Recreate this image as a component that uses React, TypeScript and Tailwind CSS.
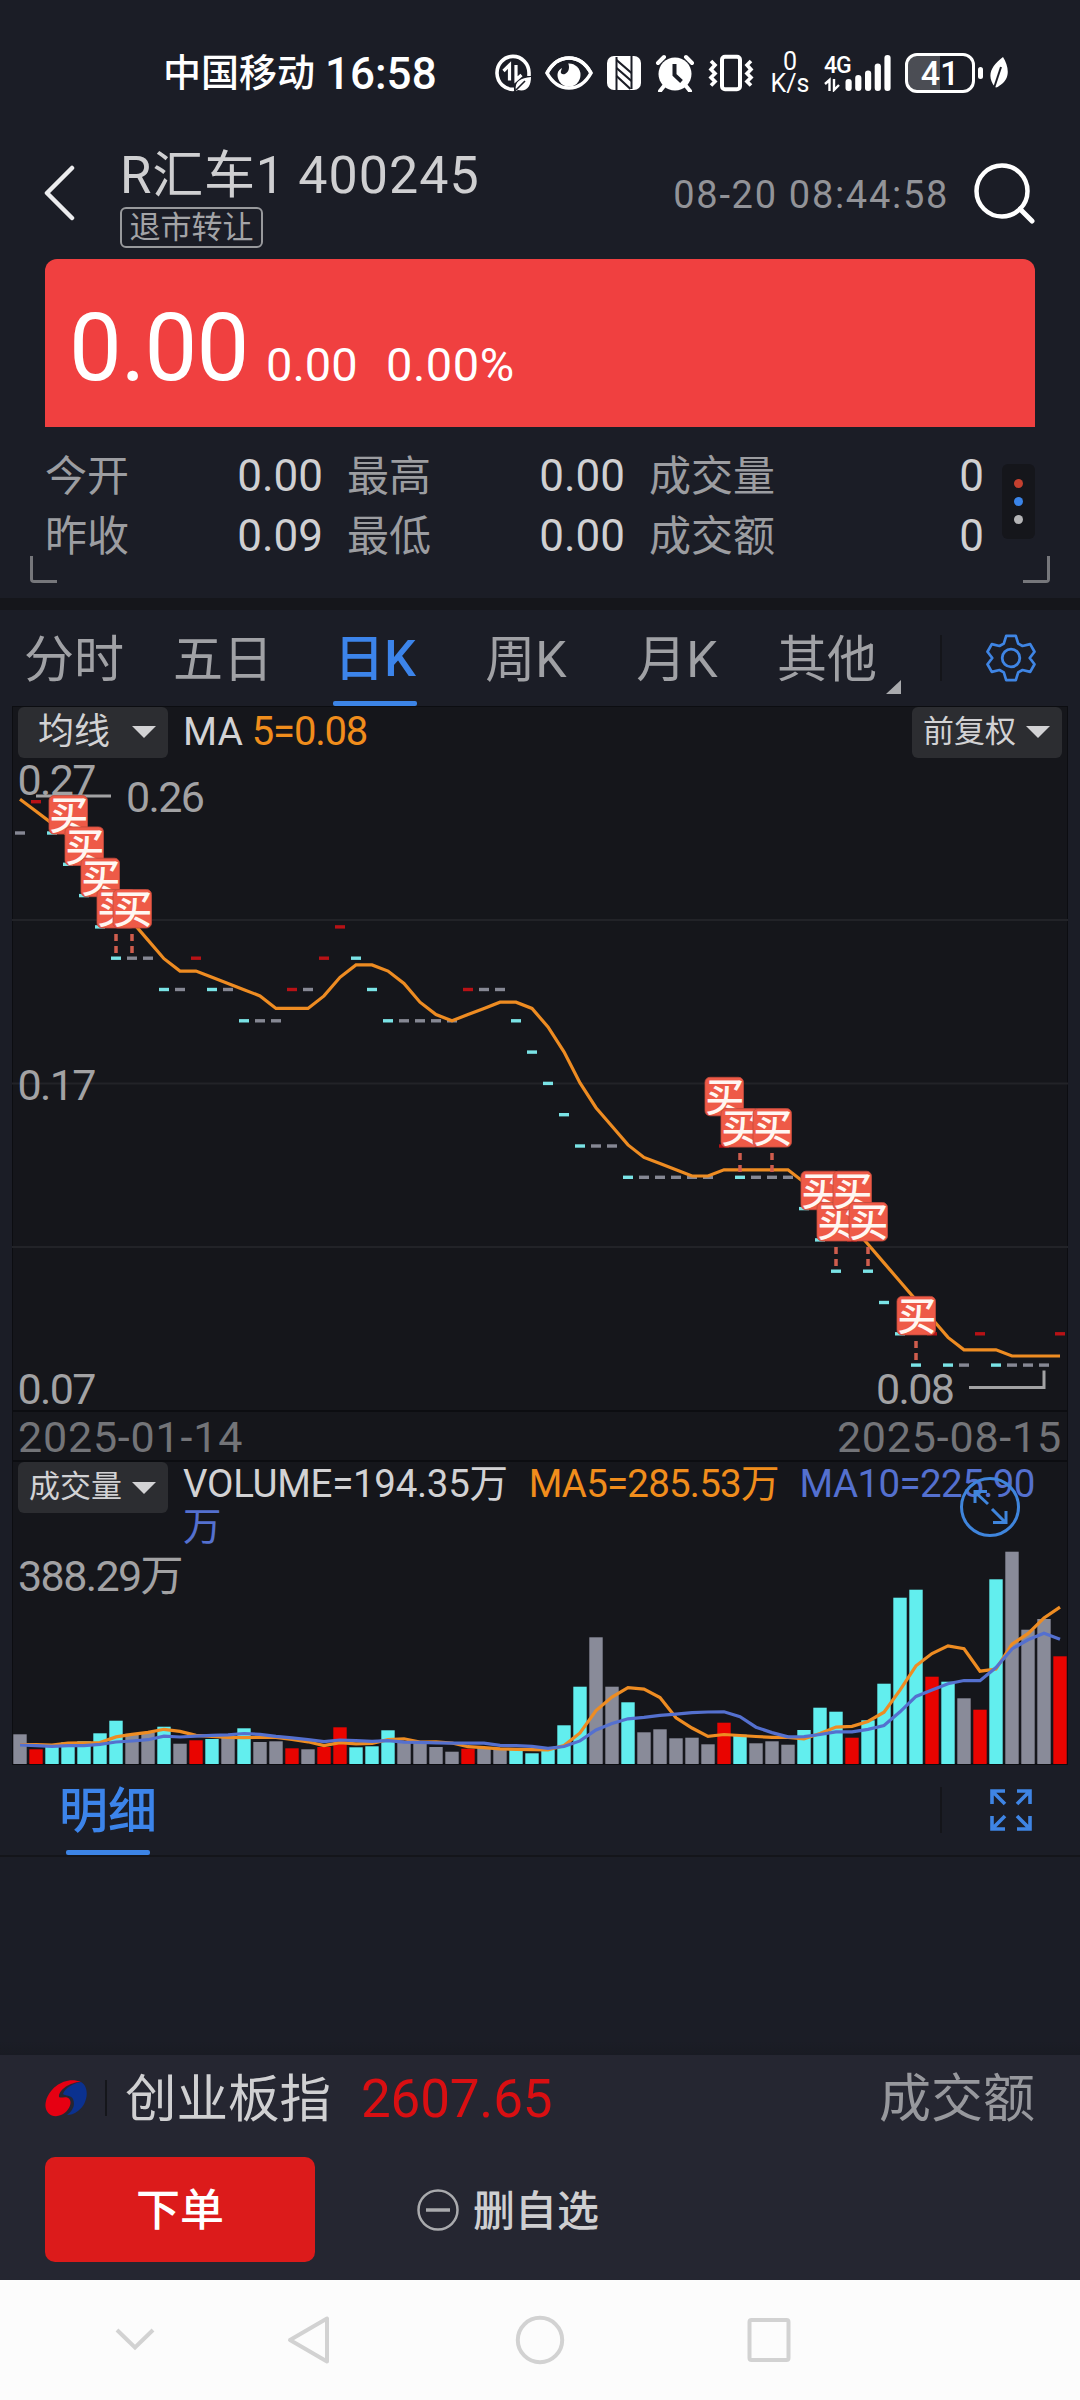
import React from "react";

const FONT = "font-[Roboto,'Noto_Sans_CJK_SC',sans-serif]";

const COLORS: Record<string, string> = {
  g: "#898b99",
  r: "#e90400",
  c: "#62eeee",
};

const DASH_COLORS: Record<string, string> = {
  g: "#868894",
  r: "#b81216",
  c: "#7ae3e6",
};

// one letter per day: g = flat, r = up, c = down
const KINDS =
  "grccccc" + "ggcgrcg" + "cggrgrr" + "ccc" + "gggg" + "rgg" + "cccc" + "cgg" + "cggggg" + "rcggg" + "cccrcccc" + "rcgrcgggr";

// price steps below 0.26, one step is 0.01
const LEVELS = [
  1, 0, 1, 2, 3, 4, 5, 5, 5, 6, 6, 5, 6, 6, 7, 7, 7, 6, 6, 5, 4, 5, 6, 7, 7, 7,
  7, 7, 6, 6, 6, 7, 8, 9, 10, 11, 11, 11, 12, 12, 12, 12, 12, 12, 11, 12, 12,
  12, 12, 13, 14, 15, 14, 15, 16, 17, 18, 17, 18, 18, 17, 18, 18, 18, 18, 17,
];

const VOLUMES = [
  29.7, 14.7, 17, 21.7, 22.7, 30.7, 43.3, 30.3, 31.7, 37.3, 20.3, 23.7, 25, 27,
  35.7, 22, 22.7, 15.7, 14.7, 17, 36.7, 16.7, 17.7, 33.7, 21, 21, 17, 12.3,
  15.3, 16.3, 14.7, 14.3, 10.7, 14.3, 38.7, 77.3, 126.7, 77.3, 61.7, 31.7,
  34.7, 25.7, 26.3, 19.7, 41.3, 29.3, 20.7, 22.7, 19.3, 34, 56.3, 52.3, 26.3,
  43.7, 80.3, 166.3, 174.3, 87.3, 82.3, 65.7, 54.3, 184.7, 212.3, 134.3, 145,
  107.7,
];

const BUYS = [3, 4, 5, 6, 7, 44, 45, 47, 50, 51, 52, 53, 56];

const barX = (i: number) => 8 + 16 * i;

const average = (data: number[], size: number, first: number[]) =>
  data.map((_, i) => {
    if (i < first.length) return first[i];
    const part = data.slice(i - size + 1, i + 1);
    return part.reduce((a, b) => a + b, 0) / size;
  });

const toPoints = (values: number[], y: (v: number) => number) =>
  values.map((v, i) => `${barX(i)},${y(v).toFixed(1)}`).join(" ");

const priceMa = average(LEVELS, 5, [-0.14, 0.25, 0.64, 1.02]);
const volMa5 = average(VOLUMES, 5, [19.5, 19.5, 19, 21]);
const volMa10 = average(VOLUMES, 10, [19, 18.3, 17.7, 18.3, 18.3, 19.7, 22, 23, 24.3]);

const StatusBar = () => (
  <div className="flex h-[146px] items-center pl-[163px] text-white">
    <span className="w-[156px] text-[38px] font-medium whitespace-nowrap">中国移动</span>
    <span className="ml-[6px] w-[112px] pt-[2px] text-[44px] font-medium">16:58</span>
    <svg className="ml-[57px]" width="38" height="40" viewBox="0 0 38 40" fill="none" stroke="#fff">
      <path d="M35 20A16 16.5 0 1 0 20 36.3M35 20v3" strokeWidth="3.6" />
      <path d="M9.5 18l6-6v15.5M22 12v15l5.5-5" strokeWidth="3.2" />
      <path d="M22 38c-2-10 5-13 15-14 0 9-4 15-13 13z" fill="#fff" stroke="none" />
      <path d="M22 37l9-9" stroke="#1b1d26" strokeWidth="1.6" />
    </svg>
    <svg className="ml-[12px]" width="50" height="36" viewBox="0 0 50 36">
      <path d="M3 18C14-2 36-2 47 18C36 38 14 38 3 18Z" fill="none" stroke="#fff" strokeWidth="3.6" />
      <circle cx="25" cy="20" r="11.5" fill="#fff" />
      <path d="M12 8h12c2 4 1 9-3 11-3 1-5-1-4-3l1-3c-2 1-4 3-5 6z" fill="#1b1d26" />
      <path d="M3 18C14-2 36-2 47 18" fill="none" stroke="#fff" strokeWidth="3.6" />
    </svg>
    <svg className="ml-[13px]" width="34" height="36" viewBox="0 0 34 36">
      <rect x="0" y="1" width="34" height="34" rx="7" fill="#fff" />
      <path d="M9.5 35V2M24.5 34V1" fill="none" stroke="#1b1d26" strokeWidth="2" />
      <path d="M9.500 5l15 13M9.500 13l15 13M9.500 21l14 13" fill="none" stroke="#1b1d26" strokeWidth="2.200" />
    </svg>
    <svg className="ml-[14px]" width="40" height="38" viewBox="0 0 40 38">
      <circle cx="20" cy="20" r="16.5" fill="#fff" />
      <path d="M3 9l6-6M37 9l-6-6M9 32l-4 5M31 32l4 5" stroke="#fff" strokeWidth="4" strokeLinecap="round" />
      <path d="M19.5 10v11l7 6.5" fill="none" stroke="#1b1d26" strokeWidth="4" />
    </svg>
    <svg className="ml-[13px]" width="46" height="38" viewBox="0 0 46 38" fill="none" stroke="#fff">
      <rect x="14" y="2.8" width="18" height="32.5" rx="3" strokeWidth="4" />
      <path d="M3 7l4 4-4 4.500 4 4-4 4 4 4-4 4M43 7l-4 4 4 4.500-4 4 4 4-4 4 4 4" strokeWidth="3.600" />
    </svg>
    <div className="ml-[18px] flex w-[36px] flex-col items-center text-[25px] leading-[22px]">
      <span>0</span>
      <span className="whitespace-nowrap">K/s</span>
    </div>
    <div className="ml-[16px] flex w-[26px] flex-col">
      <span className="text-[23px] leading-[22px] font-medium tracking-[-1px]">4G</span>
      <svg width="18" height="15" viewBox="0 0 18 15" fill="none" stroke="#fff" strokeWidth="2.4">
        <path d="M1 7l4.5-4v11M10 2v11l5-5" />
      </svg>
    </div>
    <svg className="ml-[-5px]" width="46" height="38" viewBox="0 0 46 38" fill="#fff">
      <rect x="0.5" y="25" width="6.2" height="12" rx="3" />
      <rect x="10.2" y="21" width="6.2" height="16" rx="3" />
      <rect x="20" y="16.5" width="6.2" height="20.5" rx="3" />
      <rect x="29.7" y="9.5" width="6.2" height="27.5" rx="3" />
      <rect x="39.4" y="1" width="6.2" height="36" rx="3" />
    </svg>
    <div className="ml-[14px] flex h-[40px] w-[70px] items-center justify-center rounded-[12px] border-[3px] border-white bg-linear-to-r from-[#4b4d54] from-50% to-transparent to-50% text-[34px] font-medium">
      41
    </div>
    <div className="ml-[3px] h-[12px] w-[5px] rounded-full bg-white" />
    <svg className="ml-[6px]" width="20" height="32" viewBox="0 0 20 32">
      <path d="M14 0c6 10 8 22-4 29-1 1-3 2-4 1C-3 19 2 9 14 0z" fill="#fff" />
      <path d="M12 10L5 31" stroke="#1b1d26" strokeWidth="2" />
    </svg>
  </div>
);

const TitleBar = () => (
  <div className="flex h-[113px] pr-[45px] pl-[43px]">
    <svg className="mt-[19px]" width="34" height="56" viewBox="0 0 34 56" fill="none" stroke="#ececee" strokeWidth="4.5">
      <path d="M29 3L4 28l25 25" strokeLinecap="round" strokeLinejoin="round" />
    </svg>
    <div className="ml-[43px]">
      <h1 className="h-[58px] text-[51px] leading-[59px] tracking-[0.8px] whitespace-pre text-[#cfcfd1]">
        R汇车1<span className="ml-[13px] text-[52px] tracking-[1px]">400245</span>
      </h1>
      <div className="mt-[3px] flex h-[41px] w-[143px] items-center justify-center rounded-[6px] border-2 border-[#98999c] pt-[2px] text-[31px] text-[#a3a4a7]">
        退市转让
      </div>
    </div>
    <div className="ml-auto flex h-[96px] items-center">
      <span className="mr-[24px] pt-[2px] text-[38px] tracking-[1.7px] text-[#929398]">08-20 08:44:58</span>
      <svg width="62" height="62" viewBox="0 0 62 62" fill="none" stroke="#fff" strokeLinecap="round">
        <circle cx="29" cy="28" r="25.5" strokeWidth="4.5" />
        <path d="M47 46l12 12" strokeWidth="5" />
      </svg>
    </div>
  </div>
);

const stats = [
  ["今开", "0.00", "最高", "0.00", "成交量", "0"],
  ["昨收", "0.09", "最低", "0.00", "成交额", "0"],
];

const Quote = () => (
  <section className="h-[339px] px-[45px]">
    <div className="flex h-[168px] items-end rounded-t-[12px] bg-[#f04040] pb-[45px] pl-[24px] text-white">
      <span className="w-[179px] text-[94px] leading-[68px] tracking-[-1px]">0.00</span>
      <span className="ml-[18px] w-[92px] text-[47px] leading-[35px]">0.00</span>
      <span className="ml-[28px] text-[47px] leading-[35px] tracking-[0.5px]">0.00%</span>
    </div>
    <div className="flex h-[129px] pt-[17px]">
      <div className="w-[939px] pt-[2px]">
        {stats.map((row) => (
          <div key={row[4]} className="flex h-[60px] items-center text-[42px] whitespace-nowrap text-[#9c9da1]">
            <span className="w-[84px]">{row[0]}</span>
            <span className="w-[194px] text-right text-[44px] text-[#d0d0d2]">{row[1]}</span>
            <span className="ml-[24px] w-[84px]">{row[2]}</span>
            <span className="w-[194px] text-right text-[44px] text-[#d0d0d2]">{row[3]}</span>
            <span className="ml-[24px] w-[126px]">{row[4]}</span>
            <span className="flex-1 text-right text-[44px] text-[#d0d0d2]">{row[5]}</span>
          </div>
        ))}
      </div>
      <div className="mt-[20px] ml-[18px] flex h-[75px] w-[33px] flex-col items-center justify-center gap-[9px] rounded-[6px] bg-[#15161b]">
        <i className="h-[9px] w-[9px] rounded-full bg-[#c4402f]" />
        <i className="h-[9px] w-[9px] rounded-full bg-[#3a84e8]" />
        <i className="h-[9px] w-[9px] rounded-full bg-[#b4b4b6]" />
      </div>
    </div>
    <div className="mx-[-15px] flex justify-between">
      <i className="h-[27px] w-[27px] rounded-bl-[4px] border-b-[3px] border-l-[3px] border-[#76777b]" />
      <i className="h-[27px] w-[27px] rounded-br-[4px] border-r-[3px] border-b-[3px] border-[#76777b]" />
    </div>
  </section>
);

const Gear = () => (
  <svg width="50" height="50" viewBox="0 0 50 50" fill="none" stroke="#3f85e4" strokeWidth="2.8" strokeLinejoin="round">
    <path d="M20 2h10l2.500 8 4.500 2.500 8-2 4.500 8-5 6.500 5 6.500-4.500 8-8-2-4.500 2.500L30 48H20l-2.500-8-4.500-2.500-8 2-4.500-8 5-6.500-5-6.500 4.500-8 8 2 4.500-2.500z" transform="translate(1 1) scale(.96)" />
    <circle cx="25" cy="25" r="8.8" />
  </svg>
);

const Tabs = () => (
  <nav className="flex h-[96px] items-center text-[50px] whitespace-nowrap text-[#a0a1a5]">
    <span className="w-[148px] pt-[4px] text-center">分时</span>
    <span className="w-[150px] pt-[4px] text-center">五日</span>
    <span className="flex h-full w-[154px] flex-col items-center justify-between text-[#3c84ea]">
      <span className="pt-[12px] font-medium">日K</span>
      <i className="h-[5px] w-[84px] rounded-[2px] bg-[#3c84e6]" />
    </span>
    <span className="w-[148px] pt-[4px] text-center">周K</span>
    <span className="w-[154px] pt-[4px] text-center">月K</span>
    <span className="w-[146px] pt-[4px] text-center">其他</span>
    <svg className="mt-[58px] ml-[-14px]" width="15" height="14" viewBox="0 0 15 14">
      <path d="M15 0v14H0z" fill="#a9aaad" />
    </svg>
    <i className="ml-[39px] h-[46px] w-[2px] bg-[#14151a]" />
    <div className="ml-[44px]">
      <Gear />
    </div>
  </nav>
);

const Picker = ({ label, small }: { label: string; small?: boolean }) => (
  <div className="flex h-[51px] w-[150px] shrink-0 items-center justify-between rounded-[6px] bg-[#2c2d31] pr-[12px] text-[#d2d2d4]">
    <span className={small ? "pl-[11px] text-[31px]" : "pl-[20px] text-[36px]"}>{label}</span>
    <svg width="24" height="12" viewBox="0 0 24 12">
      <path d="M0 0h24L12 12z" fill="#d2d2d4" />
    </svg>
  </div>
);

const PriceChart = () => (
  <svg className="block" width="1056" height="653" viewBox="0 51 1056 653">
    {[214, 377.5, 541].map((y) => (
      <path key={y} d={`M0 ${y}H1056`} stroke="#222328" strokeWidth="2" />
    ))}
    <g fill="#a2a2a4" fontSize="43" letterSpacing="-1.6">
      <text x="5.5" y="89">0.27</text>
      <text x="114" y="106">0.26</text>
      <text x="5.5" y="394">0.17</text>
      <text x="5.5" y="698">0.07</text>
      <text x="864" y="698">0.08</text>
    </g>
    <path d="M24 90h75M957 681.5h75v-17" fill="none" stroke="#a2a2a4" strokeWidth="3" />
    {LEVELS.map((level, i) => (
      <rect key={i} x={barX(i) - 5} y={94 + 31.3 * level} width="10" height="3.4" fill={DASH_COLORS[KINDS[i]]} />
    ))}
    <polyline
      points={toPoints(priceMa, (v) => 97.5 + 31.04 * v)}
      fill="none"
      stroke="#ee8c22"
      strokeWidth="3.2"
    />
    {BUYS.map((i) => {
      const top = 27 + 31.3 * LEVELS[i];
      return (
        <g key={i}>
          <path d={`M${barX(i)} ${top + 44.5}v7m0 5v7`} stroke="#cf5d4e" strokeWidth="3.5" />
          <rect x={barX(i) - 19} y={top} width="38.5" height="38.5" rx="5" fill="#ee5a47" stroke="#c04a3c" strokeWidth="0.8" />
          <text x={barX(i) + 0.8} y={top + 33.8} fontSize="39" fontWeight="500" textAnchor="middle" fill="#fff7f2">
            买
          </text>
        </g>
      );
    })}
  </svg>
);

const VolumeChart = () => (
  <svg className="block" width="1056" height="220" viewBox="0 0 1056 220">
    {VOLUMES.map((v, i) => (
      <rect key={i} x={barX(i) - 6.7} y={218 - v} width="13.4" height={v} fill={COLORS[KINDS[i]]} />
    ))}
    <polyline points={toPoints(volMa5, (v) => 218 - v)} fill="none" stroke="#ee8c22" strokeWidth="3.2" />
    <polyline points={toPoints(volMa10, (v) => 218 - v)} fill="none" stroke="#5470cf" strokeWidth="3.2" />
  </svg>
);

const Charts = () => (
  <section className="mx-[12px] h-[1059px] border-x-1 border-b-2 border-[#0c0d11] bg-[#15161b]">
    <div className="mx-[-1px] flex h-[51px] items-center border-t-1 border-[#0c0d11] px-[6px] text-[39px]">
      <Picker label="均线" />
      <span className="ml-[15px] text-[#d2d2d4]">MA</span>
      <span className="ml-[9px] text-[40px] tracking-[-1.2px] text-[#f08d1c]">5=0.08</span>
      <div className="ml-auto">
        <Picker label="前复权" small />
      </div>
    </div>
    <div className="mx-[-1px]">
      <PriceChart />
    </div>
    <div className="mx-[-1px] flex h-[52px] items-center justify-between border-y-2 border-[#0c0d11] px-[6px] pt-[2px] text-[43px] tracking-[0.8px] text-[#737478]">
      <span>2025-01-14</span>
      <span>2025-08-15</span>
    </div>
    <div className="relative mx-[-1px] flex h-[84px] pl-[6px]">
      <Picker label="成交量" small />
      <p className="ml-[15px] text-[38.5px] leading-[43px] tracking-[-0.6px] whitespace-nowrap text-[#d2d2d4]">
        <span className="tracking-[-0.3px]">VOLUME=194.35万</span>
        <span className="ml-[21px] tracking-[-0.8px] text-[#f08d1c]">MA5=285.53万</span>
        <span className="ml-[21px] text-[#5470cf]">
          MA10=225.90
          <br />万
        </span>
      </p>
      <svg className="absolute top-[14px] left-[947px]" width="62" height="62" viewBox="0 0 62 62" fill="none" stroke="#3f85dc" strokeWidth="3">
        <circle cx="31" cy="31" r="28.5" />
        <path d="M29 28L16 16M16 27V15.5h12M33 33l13 13M47 35v11.5H34" />
      </svg>
    </div>
    <div className="mx-[-1px] h-0">
      <span className="block pl-[6px] text-[43px] leading-[61px] tracking-[-1.6px] text-[#a2a2a4]">388.29万</span>
    </div>
    <div className="mx-[-1px]">
      <VolumeChart />
    </div>
  </section>
);

const Detail = () => (
  <section className="flex h-[290px] flex-col">
    <div className="flex h-[92px] items-center border-b-2 border-[#14151a]">
      <div className="ml-[59px] flex h-full flex-col items-center justify-end text-[49px] font-medium text-[#3c84ea]">
        <span className="leading-[60px]">明细</span>
        <i className="mt-[8px] h-[5px] w-[84px] rounded-[2px] bg-[#3c84e6]" />
      </div>
      <i className="ml-auto h-[46px] w-[2px] bg-[#14151a]" />
      <svg className="mr-[47px] ml-[47px]" width="44" height="44" viewBox="0 0 44 44" fill="none" stroke="#3f85e4" strokeWidth="3.6">
        <path d="M3 16V3h13M3 3l13 13M28 3h13v13M41 3L28 16M3 28v13h13M3 41l13-13M28 41h13V28M41 41L28 28" />
      </svg>
    </div>
    <div className="mt-auto h-[14px] bg-linear-to-b from-[#1b1d26] to-[#191b23]" />
  </section>
);

const Footer = () => (
  <footer className="h-[225px] bg-[#252631]">
    <div className="flex h-[86px] items-center pr-[45px] pl-[45px] text-[51.5px] whitespace-nowrap">
      <svg width="42" height="38" viewBox="0 0 42 38">
        <path d="M36 3C22-3 5 7 1 22c-3 11 6 18 15 14 7-3 11-11 9-15-3-5-9-1-11-3-1-6 10-15 22-15z" fill="#e60012" />
        <path d="M36 3c9 5 7 22-3 29-4 3-8 4-11 4 7-5 8-11 6-16-2-4-8-3-10-5 2-6 10-11 18-12z" fill="#0b318f" />
      </svg>
      <i className="ml-[18px] h-[36px] w-[2px] bg-[#15161b]" />
      <span className="ml-[18px] pt-[3px] text-[#d0d0d2]">创业板指</span>
      <span className="ml-[30px] pt-[3px] text-[53px] tracking-[-0.2px] text-[#d90f12]">2607.65</span>
      <span className="ml-auto pt-[3px] text-[52px] text-[#97989d]">成交额</span>
    </div>
    <div className="flex items-center pt-[16px] pl-[45px]">
      <button className="h-[105px] w-[270px] rounded-[10px] bg-[#dc1b1b] pt-[3px] text-[44px] font-medium text-white">下单</button>
      <svg className="ml-[102px]" width="42" height="42" viewBox="0 0 42 42" fill="none" stroke="#a9aaad">
        <circle cx="21" cy="21" r="19.5" strokeWidth="2.5" />
        <path d="M9 21h24" strokeWidth="3.5" />
      </svg>
      <span className="ml-[14px] pt-[3px] text-[42px] font-medium text-[#cfcfd1]">删自选</span>
    </div>
  </footer>
);

const NavBar = () => (
  <div className="h-[120px] bg-[#fcfcfc]">
    <svg width="1080" height="120" viewBox="0 0 1080 120" fill="none" stroke="#d2d2d2" strokeWidth="4">
      <path d="M117 50l18 17.5L153 50" />
      <path d="M327 38.5v43L290 60z" strokeLinejoin="round" />
      <circle cx="540" cy="60" r="22.2" />
      <rect x="749.5" y="40" width="39" height="40" rx="2" />
    </svg>
  </div>
);

const App = () => {
  return (
    <div className={`${FONT} flex h-[2400px] w-[1080px] flex-col overflow-hidden bg-[#1b1d26]`}>
      <StatusBar />
      <TitleBar />
      <Quote />
      <div className="h-[12px] shrink-0 bg-[#15161b]" />
      <Tabs />
      <Charts />
      <Detail />
      <Footer />
      <NavBar />
    </div>
  );
};

export default App;
